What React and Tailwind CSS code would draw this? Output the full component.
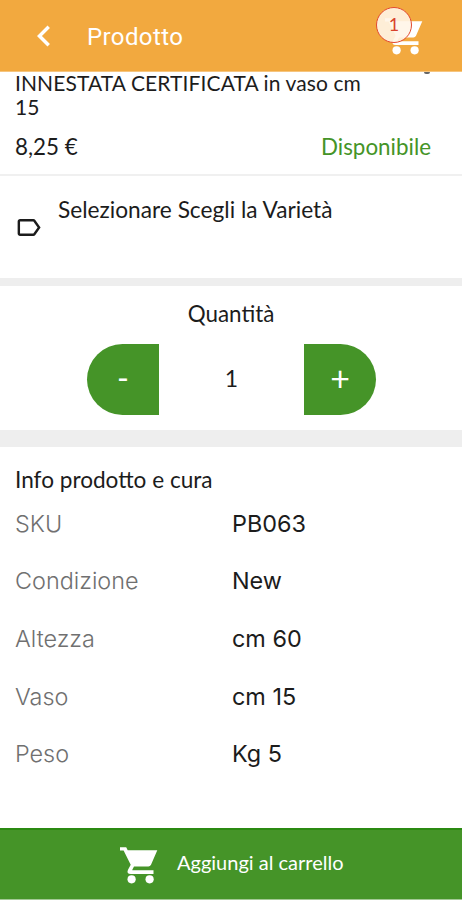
import React from 'react';
import { MdChevronLeft, MdLabelOutline } from 'react-icons/md';

const details = [
  { label: 'SKU', value: 'PB063' },
  { label: 'Condizione', value: 'New' },
  { label: 'Altezza', value: 'cm 60' },
  { label: 'Vaso', value: 'cm 15' },
  { label: 'Peso', value: 'Kg 5' },
];

function CartIcon() {
  return (
    <svg viewBox="0 0 44 44" className="size-[44px]" fill="currentColor" aria-hidden="true">
      <path d="M3 4.2h6.2l1.5 3H40.3L34 21.8q-.8 1.7-2.6 1.7H17l-1.6 2.9q-.4.9.6.9h20.5V31H13.8q-4.6 0-2.8-4.2l2.7-5L6.6 7.6H3z" />
      <circle cx="14.6" cy="36.3" r="4.1" />
      <circle cx="32.6" cy="36.3" r="4.1" />
    </svg>
  );
}

function Header() {
  return (
    <header className="h-[72px] shrink-0 bg-[#f2a93f] border-b border-[#f6c57e] flex items-center text-white pl-[23px] pr-9">
      <button type="button" aria-label="Indietro">
        <MdChevronLeft className="size-[42px]" />
      </button>
      <h1 className="ml-[22px] mt-[3px] text-[24px] leading-8 font-['Roboto',sans-serif] tracking-[0.4px]">Prodotto</h1>
      <div className="relative ml-auto">
        <CartIcon />
        <span className="absolute -left-[6px] -top-[7px] size-9 rounded-full border-[1.5px] border-[#e2492f] bg-[#fff5e8]/90 text-[#d8432c] text-[18px] flex items-center justify-center font-['Lato',sans-serif]">
          1
        </span>
      </div>
    </header>
  );
}

export default function App() {
  return (
    <div className="h-[900px] w-[462px] flex flex-col bg-white text-[#1c1c1c] font-['Lato',sans-serif] overflow-hidden">
      <Header />

      {/* Title and price */}
      <section className="relative h-[104px] shrink-0 px-[15px] border-b-2 border-[#f0f0f0]">
        {/* tail of the line scrolled under the header */}
        <div className="absolute left-[424px] top-0 h-[2px] w-[6px] rounded-b-sm bg-[#666]" />
        <p className="-mt-px w-[355px] text-[21px] leading-6 tracking-[0.1px]">
          INNESTATA CERTIFICATA in vaso cm 15
        </p>
        <div className="mt-[14px] pr-4 flex items-center justify-between text-[22.4px] leading-7">
          <span>8,25 €</span>
          <span className="text-[#459428]">Disponibile</span>
        </div>
      </section>

      {/* Variety */}
      <section className="h-[102px] shrink-0 pl-[14px] flex items-center">
        <MdLabelOutline className="size-[29px]" />
        <span className="ml-[15px] mb-[35px] text-[22.7px] leading-7">Selezionare Scegli la Varietà</span>
      </section>
      <div className="h-2 shrink-0 bg-[#eeeeee]" />

      {/* Quantity */}
      <section className="h-[144px] shrink-0 flex flex-col items-center">
        <h2 className="mt-[14px] text-[22.4px] leading-7">Quantità</h2>
        <div className="mt-4 ml-px w-[289px] h-[71px] flex justify-between items-center">
          <button type="button" className="h-full w-[72px] rounded-l-[36px] bg-[#459428] text-white text-[32px] leading-none pb-1">-</button>
          <span className="text-[23px] pb-[3px]">1</span>
          <button type="button" className="h-full w-[72px] rounded-r-[36px] bg-[#459428] text-white text-[34px] leading-none pb-1">+</button>
        </div>
      </section>
      <div className="h-[17px] shrink-0 bg-[#eeeeee]" />

      {/* Details */}
      <section className="grow px-[15px] pt-[19px]">
        <h2 className="text-[22.6px] leading-7">Info prodotto e cura</h2>
        <dl className="mt-[13.5px] font-['Inter',sans-serif] text-[23.4px]">
          {details.map((item) => (
            <div key={item.label} className="h-[57.7px] pt-[1px] flex leading-[30px]">
              <dt className="w-[217px] font-light text-[#707070]">{item.label}</dt>
              <dd>{item.value}</dd>
            </div>
          ))}
        </dl>
      </section>

      <button type="button" className="h-[72px] shrink-0 flex items-center bg-[#459428] border-t-2 border-t-[#2b8a12] border-b border-b-[#a3c995] text-white pl-[117px]">
        <CartIcon />
        <span className="ml-4 mb-[5px] text-[20px]">Aggiungi al carrello</span>
      </button>
    </div>
  );
}
